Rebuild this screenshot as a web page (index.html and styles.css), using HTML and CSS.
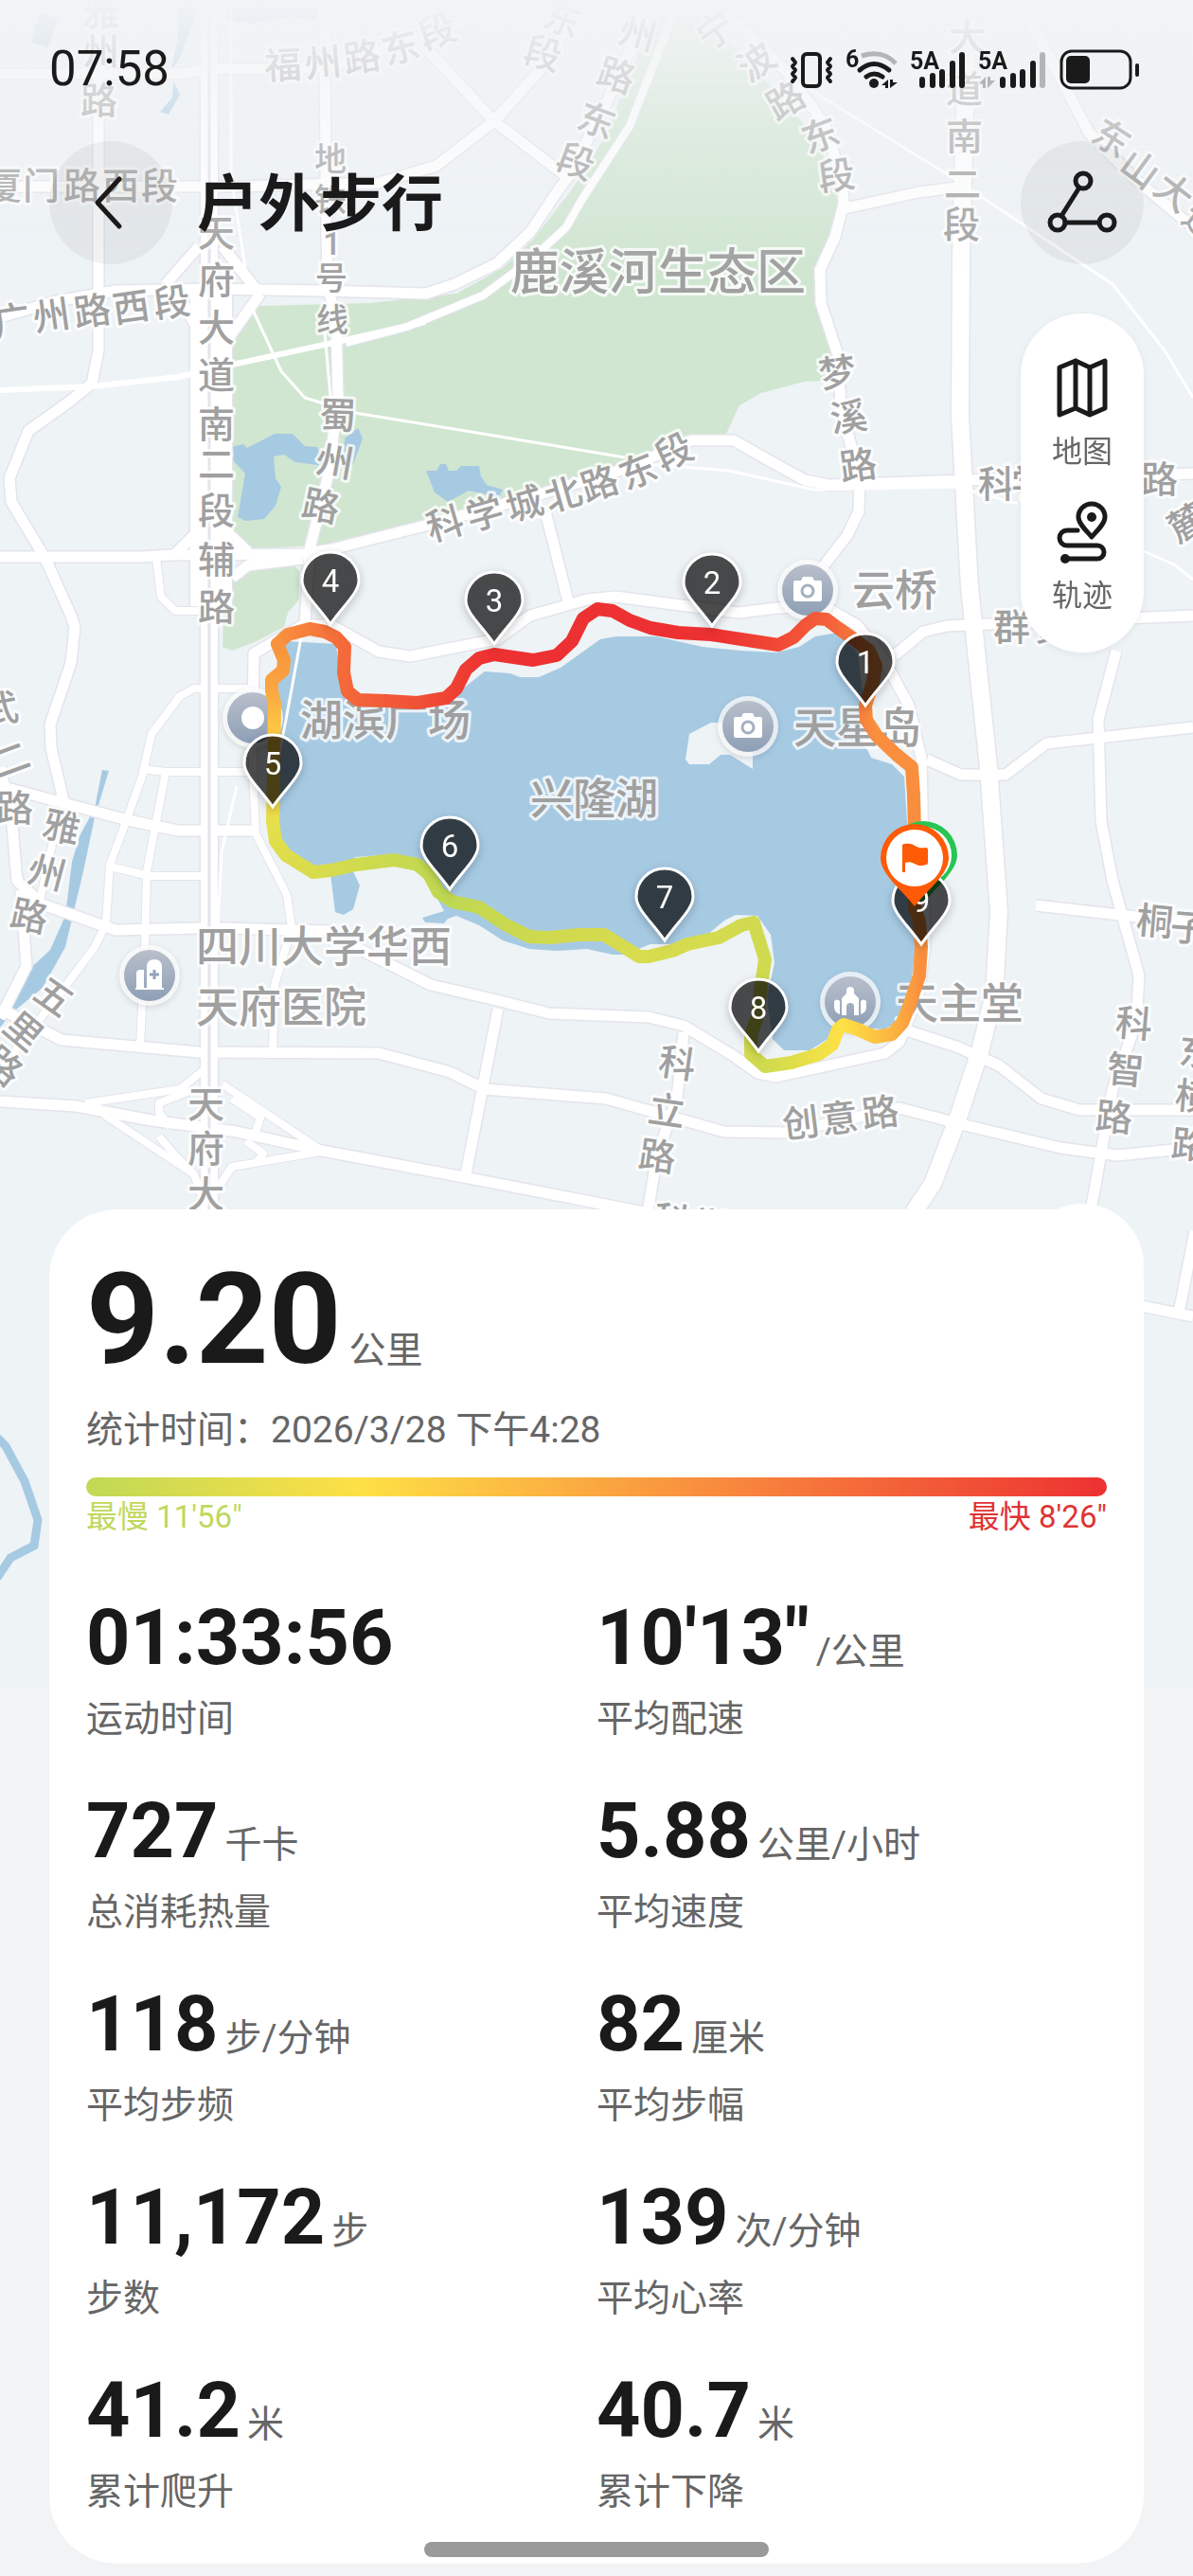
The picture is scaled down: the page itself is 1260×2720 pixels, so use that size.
FILE: index.html
```html
<!DOCTYPE html>
<html lang="zh-CN">
<head>
    <meta charset="UTF-8">
    <meta name="viewport" content="width=device-width, initial-scale=1.0">
    <title>户外步行</title>
    <link rel="stylesheet" href="styles.css">
</head>
<body>
<div class="screen">

    <!-- Map with the walked track -->
    <svg class="map" viewBox="0 0 1260 1782" role="img" aria-label="运动轨迹地图">
        <defs>
            <linearGradient id="fade" x1="0" y1="0" x2="0" y2="1">
                <stop offset="0" stop-color="#f1f3f5"/>
                <stop offset=".2" stop-color="#f1f3f5" stop-opacity=".8"/>
                <stop offset=".5" stop-color="#f1f3f5" stop-opacity=".42"/>
                <stop offset="1" stop-color="#f1f3f5" stop-opacity="0"/>
            </linearGradient>
            <linearGradient id="poi-fill" x1="0" y1="0" x2="0" y2="1">
                <stop offset="0" stop-color="#b9bfcb"/>
                <stop offset="1" stop-color="#8e9fb6"/>
            </linearGradient>
            <linearGradient id="pace-north" gradientUnits="userSpaceOnUse" x1="364" y1="0" x2="925" y2="0">
                <stop offset="0" stop-color="#f4683a"/>
                <stop offset=".14" stop-color="#f15036"/>
                <stop offset=".27" stop-color="#ed3132"/>
                <stop offset=".7" stop-color="#ed3132"/>
                <stop offset=".85" stop-color="#f25137"/>
                <stop offset=".92" stop-color="#f5643a"/>
                <stop offset="1" stop-color="#f98f3e"/>
            </linearGradient>
            <linearGradient id="pace-corner" gradientUnits="userSpaceOnUse" x1="364" y1="0" x2="293" y2="0">
                <stop offset="0" stop-color="#f4683a"/>
                <stop offset="1" stop-color="#f8923d"/>
            </linearGradient>
            <linearGradient id="pace-west" gradientUnits="userSpaceOnUse" x1="0" y1="680" x2="0" y2="921">
                <stop offset="0" stop-color="#f8923d"/>
                <stop offset=".2" stop-color="#faa640"/>
                <stop offset=".35" stop-color="#fdc443"/>
                <stop offset=".6" stop-color="#fdd545"/>
                <stop offset=".78" stop-color="#e6df4b"/>
                <stop offset="1" stop-color="#d9dc4c"/>
            </linearGradient>
            <linearGradient id="pace-south" gradientUnits="userSpaceOnUse" x1="331" y1="0" x2="808" y2="0">
                <stop offset="0" stop-color="#d9dc4c"/>
                <stop offset=".3" stop-color="#bfd852"/>
                <stop offset=".5" stop-color="#cfd94e"/>
                <stop offset=".73" stop-color="#d8dc4e"/>
                <stop offset="1" stop-color="#d0da4f"/>
            </linearGradient>
            <linearGradient id="pace-finish" gradientUnits="userSpaceOnUse" x1="808" y1="0" x2="973" y2="0">
                <stop offset="0" stop-color="#cfda4e"/>
                <stop offset=".35" stop-color="#f0e148"/>
                <stop offset=".5" stop-color="#fee045"/>
                <stop offset=".8" stop-color="#fdb641"/>
                <stop offset="1" stop-color="#f98f3e"/>
            </linearGradient>

            <g id="roads-wide">
                <path d="M221 0V1277"/>
                <path d="M210 300V640M236 310V640M210 330L221 370M236 330L222 370"/>
                <path d="M1022 0L1015 270 1014 440 1024 620 1044 810 1055 963 1050 1050 1035 1110 1012 1180 985 1250 965 1280"/>
            </g>
            <g id="roads-main">
                <path d="M104 0V370L97 405 72 425 30 455 10 505 12 530 48 590 75 650 79 662 75 700 53 765 54 790 67 845"/>
                <path d="M0 78H190L230 72 286 73 350 70 506 17"/>
                <path d="M0 197H245L400 193 461 175 522 128 571 73 604 20M449 50L522 128 600 188"/>
                <path d="M343 13L344 183 346 300 355 340 357 420 347 500 327 580 322 660"/>
                <path d="M0 335L60 318 122 307 220 305 340 307 450 310 480 300 525 278 560 245 590 200 600 187 640 110 680 20"/>
                <path d="M0 588H150L180 586 320 585 350 580 449 555 560 525 660 495 730 465H775L810 485 850 507 875 512 1020 507 1260 500"/>
                <path d="M185 585L210 560M238 560L262 583M245 610L262 597 320 590M275 310L225 380M175 300L210 260M270 305L235 260M185 305L210 350"/>
                <path d="M775 20L830 75 870 130 890 190 891 215 882 250 866 285 867 320 885 375 888 430 908 505 907 540 895 565 868 600M892 220L970 203 1010 198"/>
                <path d="M1085 15L1150 140 1200 190 1260 240"/>
                <path d="M267 760L268 690 320 660 350 660 400 688 433 693 525 675 560 650 620 633 650 630 780 647 820 642 870 640 905 660 930 690 960 745 973 800 977 1000 970 1050 950 1100 935 1112 820 1137 800 1133 775 1115 722 1083 685 1074 580 1070 520 1055 455 1040 385 1005 345 983 240 980 210 980 122 982 45 955 18 930 12 860 0 810"/>
                <path d="M576 540L600 635M945 692L975 667 1000 661 1260 650M979 802L1015 818H1062L1105 785 1260 768"/>
                <path d="M1179 687L1160 760 1163 867 1175 930 1203 1030 1200 1080 1175 1150 1150 1290M1094 956L1200 968 1260 975"/>
                <path d="M948 1085L1010 1105 1055 1125 1100 1160 1140 1172H1260"/>
                <path d="M0 1065L65 1098 210 1111 400 1112 475 1132 512 1150 640 1160 765 1195 830 1196 950 1170 1015 1187 1120 1212 1180 1220 1260 1212"/>
                <path d="M0 1163L80 1168 160 1183 250 1195 340 1215 490 1243 640 1272 700 1284M1200 1378L1260 1390M1262 1300L1245 1386"/>
                <path d="M526 1065L492 1240M722 1090L715 1160 694 1220 684 1280M620 1268L670 1280"/>
                <path d="M0 830L30 838 135 866 188 877H267M0 1075L28 1020 22 940"/>
            </g>
            <g id="roads-small">
                <path d="M165 590L170 630 185 645H210"/>
                <path d="M265 727H205L190 735 160 775 150 820 131 873 116 913 112 975 100 1000 70 1040 0 1130"/>
                <path d="M150 812L175 815H267M175 815L155 920 153 1000 148 1105M116 915L158 925H212"/>
                <path d="M267 765V815L270 880 303 945 308 980 290 1040 288 1110M60 870L40 960"/>
                <path d="M365 362L430 345 510 312 560 275 598 240 615 210 665 133 710 17"/>
                <path d="M90 1165L190 1150 215 1130M235 1145L340 1215M110 1177L205 1240 218 1277M345 1215L245 1232 225 1262"/>
                <path d="M200 1152L168 1165V1175L180 1190M168 1200L185 1220 205 1240M245 1160L275 1180 270 1195M260 1205L278 1218 270 1228"/>
            </g>
            <g id="pin">
                <path d="M0 0C-13 -19 -30 -33 -30 -46A30 30 0 0 1 30 -46C30 -33 13 -19 0 0Z"/>
            </g>
            <g id="camera">
                <circle r="32" class="poi-ring"/>
                <circle r="27" fill="url(#poi-fill)"/>
                <path fill="#fff" d="M-13 -10H-7L-5 -14H5L7 -10H13Q15 -10 15 -8V10Q15 12 13 12H-13Q-15 12 -15 10V-8Q-15 -10 -13 -10Z"/>
                <circle r="6" cy="1" fill="none" stroke="#a4afc0" stroke-width="3"/>
            </g>
        </defs>

        <rect width="1260" height="1782" fill="#eef3f6"/>

        <g fill="#d0e6d1">
            <path d="M640 143L604 200 563 253 531 283 482 310 392 320 273 323 241 360 235 473V557L261 580 347 575 449 553 644 505 730 462 767 458 781 428 804 415 849 403 869 402 881 370 865 320V283L881 247 887 213 865 150 816 93 775 50 740 15H690Z"/>
            <path d="M237 623L261 597 306 592 316 603V633L304 647 300 662 269 678 245 687 235 683Z"/>
        </g>
        <g fill="#a7cae3">
            <path d="M245 472L257 469 261 473 290 458H309L322 471 335 472 343 492 312 488 300 480 289 482 291 505 297 514 291 534 279 548 259 550 251 546 259 500 246 486Z"/>
            <path d="M378 452L383 463 373 490 362 495 364 463Z"/>
            <path d="M450 497H461L465 490H471L474 497H482L487 492H506L508 503 514 512 531 517 527 525 495 518 473 530 459 520Z"/>
            <path d="M108 813L115 814 100 863 88 920 69 1000 45 1043 12 1070 0 1085V1067L24 1030 53 1003 69 967 76 910 84 883 100 853Z"/>
            <path d="M41 13L61 20 51 50 33 45ZM188 7H208L202 27 192 57 180 77 188 40ZM183 85L190 100 178 121 169 118 182 103ZM241 7H335V22L310 17 265 25 241 21Z"/>
            <path d="M302 677L355 680 360 723 371 745 480 735 494 723 512 709 539 711 549 715H569L592 705 620 685 634 675 651 672H693L742 683 783 687 820 689 844 683 861 672 885 668 906 690 912 740 908 775 920 800 942 807 955 820 960 900 967 1000 961 1047 947 1080 934 1087 906 1085 885 1090 865 1103 855 1109H828L816 1097 810 1053 818 1017 814 987 800 967 777 966 765 972 747 987 708 997H687L659 1008 647 1008 620 1002 588 1004 559 1002 531 993 506 977 482 967 473 970 469 975 449 974 446 969 469 962 461 947 445 923 404 903 375 905 373 920 380 935 373 960 363 966 354 963 349 923 331 917 310 907 296 888 290 867V740Z"/>
        </g>
        <path d="M728 775L751 763H795V812L771 797H761L749 807H728L724 802Z" fill="#eef3f6"/>
        <path class="stream" d="M-3 1518L6 1527 26 1564 40 1605 36 1632 11 1645 -3 1666"/>

        <g class="roads">
            <use href="#roads-small" stroke="#e4e4ec" stroke-width="10"/>
            <use href="#roads-main" stroke="#e4e4ec" stroke-width="14"/>
            <use href="#roads-wide" stroke="#e4e4ec" stroke-width="21"/>
            <use href="#roads-small" stroke="#fff" stroke-width="8"/>
            <use href="#roads-main" stroke="#fff" stroke-width="11"/>
            <use href="#roads-wide" stroke="#fff" stroke-width="18"/>
            <path stroke="#e4e4ec" stroke-width="3" d="M221 0V1277"/>
            <path stroke="#fff" stroke-width="6" d="M0 412L98 408 188 398 245 385 347 363 449 340"/>
            <path stroke="#fff" stroke-width="3" d="M266 325L297 392 322 420 375 436 540 463 660 483M342 340L350 430M680 490L770 497 860 517 1010 514 1075 532M840 85L1010 190 1175 300 1230 370 1260 420M1208 582L1240 596 1260 612M318 673L302 760 290 820M250 830L234 900 230 980M244 0V185M244 185L260 290"/>
        </g>

        <g class="road-names">
            <text x="87 87 85" y="27 68 120">雅州路</text>
            <text x="280 323 365 408 448" y="84 82 77 69 53" rotate="-3 -5 -8 -15 -20">福州路东段</text>
            <text x="571 551" y="27 65" rotate="20 15">东段</text>
            <text x="651 628 607 585" y="44 87 134 177" rotate="15 18 20 20">州路东段</text>
            <text x="748 791 820 853 866" y="55 88 128 163 202" rotate="-35 -35 -30 -20 -8">宁波路东段</text>
            <text x="1002 999 999 997 996" y="53 108 158 208 251">大道南二段</text>
            <text x="1150 1180 1216 1246" y="147 178 202 233" rotate="33 36 38 38">东山大道</text>
            <text x="-16 24 67 108 149" y="210">厦门路西段</text>
            <text x="-5 37 80 121 164" y="355 350 345 341 336" rotate="-8">广州路西段</text>
            <text x="209" y="260">天</text>
            <text x="209" y="310">府</text>
            <text x="209" y="360">大</text>
            <text x="209" y="410">道</text>
            <text x="209" y="462">南</text>
            <text x="209" y="504">二</text>
            <text x="209" y="553">段</text>
            <text x="209" y="605">辅</text>
            <text x="209" y="655">路</text>
            <text x="337 332 317" y="452 498 544" rotate="2 10 12">蜀州路</text>
            <text x="455 497 539 580 619 661 700" y="572 561 551 541 530 518 498" rotate="-16 -16 -16 -16 -18 -22 -25">科学城北路东段</text>
            <text x="867 879 889" y="410 457 508" rotate="-8">梦溪路</text>
            <text x="1033 1068 1119 1162 1205" y="525 524 522 521 520">科学城北路</text>
            <text x="1244" y="574" rotate="-30">麓</text>
            <text x="1049 1092" y="676">群贤</text>
            <text x="-17 -2 -4" y="766 822 867" rotate="-10 -20 0">武二路</text>
            <text x="43 27 9" y="883 930 977" rotate="12 15 12">雅州路</text>
            <text x="33 1 -21" y="1053 1087 1124" rotate="35 40 40">五里路</text>
            <text x="198 198 198" y="1180 1227 1275">天府大</text>
            <text x="694 683 673" y="1134 1184 1232" rotate="8">科立路</text>
            <text x="828 869 912" y="1202 1197 1191" rotate="-7">创意路</text>
            <text x="1177 1168 1156" y="1093 1142 1192" rotate="5">科智路</text>
            <text x="1199 1235" y="985 992" rotate="5">桐子</text>
            <text x="1244 1240 1236" y="1123 1170 1221" rotate="5">东横路</text>
            <text x="688 729" y="1300 1306" rotate="8">科学</text>
            <g class="metro">
                <text x="332" y="180">地</text>
                <text x="332" y="223">铁</text>
                <text x="341" y="269">1</text>
                <text x="333" y="306">号</text>
                <text x="334" y="350">线</text>
            </g>
        </g>

        <g class="place-names">
            <text class="park" x="539" y="306">鹿溪河生态区</text>
            <text x="900" y="640">云桥</text>
            <text x="838" y="785">天星岛</text>
            <text x="317" y="777">湖滨广场</text>
            <text x="560" y="860">兴隆湖</text>
            <text x="207" y="1016">四川大学华西</text>
            <text x="207" y="1080">天府医院</text>
            <text x="946" y="1076">天主堂</text>
        </g>

        <g class="poi">
            <use href="#camera" x="853" y="623"/>
            <use href="#camera" x="790" y="767"/>
            <g transform="translate(267 758)">
                <circle r="32" class="poi-ring"/>
                <circle r="27" fill="url(#poi-fill)"/>
                <circle r="12" fill="#fff"/>
            </g>
            <g transform="translate(158 1030)">
                <circle r="32" class="poi-ring"/>
                <circle r="27" fill="url(#poi-fill)"/>
                <path fill="#fff" d="M-14 13V-2Q-14 -6 -10 -6H-6V13H-3V-9Q-3 -17 5 -17T13 -9V13H15V15H-15V13Z"/>
                <path stroke="#93a3b6" stroke-width="3" d="M5 -6V4M0 -1H10"/>
            </g>
            <g transform="translate(898 1058)">
                <circle r="32" class="poi-ring"/>
                <circle r="27" fill="url(#poi-fill)"/>
                <path fill="#fff" d="M-17 -1Q-14 -4 -11 -1V13Q-17 11 -17 5ZM17 -1Q14 -4 11 -1V13Q17 11 17 5ZM-9 14V-4L-4 -9V-12Q-4 -16 0 -16T4 -12V-9L9 -4V14H4V5Q4 1 0 1T-4 5V14Z"/>
            </g>
        </g>

        <rect width="1260" height="290" fill="url(#fade)"/>

        <g class="track">
            <path stroke="url(#pace-north)" d="M966 960L966 880 965 840 963 810 947 797 926 777 915 760 914 745 922 720 925 703 918 687 902 675 885 663 873 654 861 653 851 660 838 673 822 681 796 677 751 670 716 668 687 663 665 655 647 645 631 643 616 653 604 677 588 692 563 697 522 691 506 695 492 707 482 727 471 737 441 742 408 740 378 739 367 730 363 710"/>
            <path stroke="url(#pace-corner)" d="M363 710L364 683 355 673 343 667 327 664 304 670 293 680"/>
            <path stroke="url(#pace-west)" d="M293 680L300 697 299 708 287 718V730L290 743 289 820 288 867 291 888 302 903 331 921"/>
            <path stroke="url(#pace-south)" d="M331 921L349 919 376 913 416 908 441 913 453 923 463 942 478 952 506 958 535 977 559 989 580 990 612 987H638L659 1000 675 1010H685L710 1004 726 997 759 990 783 977 796 974 800 987 808 1013 804 1040 800 1073 793 1093V1113L808 1126"/>
            <path stroke="url(#pace-finish)" d="M808 1126L836 1122 865 1113 879 1103 885 1087 891 1082 906 1087 924 1095 942 1092 953 1080 961 1060 971 1030 973 1000 971 973 966 958"/>
        </g>

        <!-- start, kilometre and finish pins -->
        <g transform="translate(975 954)">
            <path fill="#27c552" d="M0 0C-14 -18 -36 -34 -36 -51A36 36 0 0 1 36 -51C36 -34 14 -18 0 0Z"/>
            <circle cy="-51" r="30" fill="#fff"/>
        </g>
        <g class="pins">
            <use href="#pin" x="914" y="745"/>
            <use href="#pin" x="752" y="661"/>
            <use href="#pin" x="522" y="680"/>
            <use href="#pin" x="349" y="659"/>
            <use href="#pin" x="288" y="852"/>
            <use href="#pin" x="475" y="939"/>
            <use href="#pin" x="702" y="993"/>
            <use href="#pin" x="801" y="1110"/>
            <use href="#pin" x="973" y="997"/>
        </g>
        <g class="pin-numbers">
            <text x="914" y="711">1</text>
            <text x="752" y="627">2</text>
            <text x="522" y="646">3</text>
            <text x="349" y="625">4</text>
            <text x="288" y="818">5</text>
            <text x="475" y="905">6</text>
            <text x="702" y="959">7</text>
            <text x="801" y="1076">8</text>
            <text x="973" y="963">9</text>
        </g>
        <g transform="translate(966 957)">
            <path fill="#ff5a05" d="M0 0C-14 -18 -36 -34 -36 -51A36 36 0 0 1 36 -51C36 -34 14 -18 0 0Z"/>
            <circle cy="-51" r="30" fill="#fff"/>
            <path fill="#ff5a05" d="M-13 -64Q-13 -66 -11 -66C-5 -67 -2 -66 2 -63C6 -61 9 -62 12 -62Q14 -62 14 -60V-46Q14 -44 12 -44C7 -42 3 -43 0 -45C-4 -47 -7 -47 -10 -46V-36H-13Z"/>
        </g>
    </svg>

    <div class="status-bar">
        <time class="clock">07:58</time>
        <div class="status-icons">
            <svg width="46" height="44" viewBox="0 0 46 44" aria-label="振动">
                <g fill="none" stroke="#1a1a1a" stroke-width="4" stroke-linejoin="round" stroke-linecap="round">
                    <rect x="14" y="6" width="18" height="34" rx="4"/>
                    <path d="M3 11L6 15 3 19 6 23 3 27 6 31 3 35M43 11L40 15 43 19 40 23 43 27 40 31 43 35"/>
                </g>
            </svg>
            <svg width="54" height="44" viewBox="0 0 54 44" aria-label="WLAN">
                <text x="-1" y="20">6</text>
                <g fill="none" stroke="#1a1a1a" stroke-width="5">
                    <path stroke="#b3b4b6" d="M16 8Q38 1 52 16"/>
                    <path stroke-linecap="round" d="M14 23Q29 10 45 23M21 30Q29 24 38 30"/>
                </g>
                <circle cx="29" cy="37" r="5" fill="#1a1a1a"/>
                <path fill="#1a1a1a" d="M37 39L44 33V42H41V39ZM46 33H49V36H54L46 42Z"/>
            </svg>
            <svg width="58" height="44" viewBox="0 0 58 44" aria-label="信号 1">
                <text x="-1" y="22">5A</text>
                <path stroke="#1a1a1a" stroke-width="6" stroke-linecap="round" d="M12 33V39M23 29V39M33 25V39M44 16V39M54 7V39"/>
            </svg>
            <svg width="71" height="44" viewBox="0 0 71 44" aria-label="信号 2">
                <text x="-1" y="22">5A</text>
                <path fill="#b3b4b6" d="M0 37L7 30V42H4V38ZM9 30H12V34H17L9 42Z"/>
                <path stroke="#1a1a1a" stroke-width="6" stroke-linecap="round" d="M25 33V39M36 29V39M46 25V39M57 16V39"/>
                <path stroke="#b3b4b6" stroke-width="6" stroke-linecap="round" d="M67 7V39"/>
            </svg>
            <svg width="85" height="44" viewBox="0 0 85 44" aria-label="电池">
                <rect x="2" y="3" width="73" height="39" rx="11" fill="none" stroke="#1a1a1a" stroke-width="3"/>
                <rect x="7" y="8" width="25" height="29" rx="5" fill="#1a1a1a"/>
                <rect x="80" y="16" width="4" height="14" rx="2" fill="#1a1a1a"/>
            </svg>
        </div>
    </div>

    <header class="title-bar">
        <button class="round-btn" type="button" aria-label="返回">
            <svg viewBox="0 0 130 130"><path d="M74 40L51 65L74 90"/></svg>
        </button>
        <h1>户外步行</h1>
        <button class="round-btn" type="button" aria-label="分享">
            <svg viewBox="0 0 130 130">
                <circle cx="66" cy="42" r="8"/>
                <circle cx="39" cy="86" r="8"/>
                <circle cx="91" cy="86" r="8"/>
                <path d="M62 49L43 79M47 86H83"/>
            </svg>
        </button>
    </header>

    <div class="map-tools">
        <button type="button">
            <svg viewBox="0 0 60 64"><path d="M6 11L23 4L38 11L54 4V54L38 61L23 54L6 61ZM23 4V54M38 11V61"/></svg>
            地图
        </button>
        <button type="button">
            <svg viewBox="0 0 60 64">
                <path d="M40 38C35 32 26 24 26 17A14 14 0 0 1 54 17C54 24 45 32 40 38Z"/>
                <circle class="dot" cx="40" cy="17" r="5"/>
                <path d="M25 31H14A8 8 0 0 0 14 47H46A7 7 0 0 1 46 61H13"/>
                <circle class="dot" cx="12" cy="61" r="5"/>
            </svg>
            轨迹
        </button>
    </div>

    <main class="panel">
        <button class="locate" type="button" aria-label="定位"></button>
        <section class="card">
            <p class="distance"><strong>9.20</strong><span>公里</span></p>
            <p class="date">统计时间：2026/3/28 下午4:28</p>
            <div class="pace-bar"></div>
            <div class="pace-range">
                <span class="slow">最慢 11'56"</span>
                <span class="fast">最快 8'26"</span>
            </div>

            <dl class="stats">
                <div class="stat">
                    <dd><strong>01:33:56</strong></dd>
                    <dt>运动时间</dt>
                </div>
                <div class="stat">
                    <dd><strong>10'13"</strong><span>/公里</span></dd>
                    <dt>平均配速</dt>
                </div>
                <div class="stat">
                    <dd><strong>727</strong><span>千卡</span></dd>
                    <dt>总消耗热量</dt>
                </div>
                <div class="stat">
                    <dd><strong>5.88</strong><span>公里/小时</span></dd>
                    <dt>平均速度</dt>
                </div>
                <div class="stat">
                    <dd><strong>118</strong><span>步/分钟</span></dd>
                    <dt>平均步频</dt>
                </div>
                <div class="stat">
                    <dd><strong>82</strong><span>厘米</span></dd>
                    <dt>平均步幅</dt>
                </div>
                <div class="stat">
                    <dd><strong>11,172</strong><span>步</span></dd>
                    <dt>步数</dt>
                </div>
                <div class="stat">
                    <dd><strong>139</strong><span>次/分钟</span></dd>
                    <dt>平均心率</dt>
                </div>
                <div class="stat">
                    <dd><strong>41.2</strong><span>米</span></dd>
                    <dt>累计爬升</dt>
                </div>
                <div class="stat">
                    <dd><strong>40.7</strong><span>米</span></dd>
                    <dt>累计下降</dt>
                </div>
            </dl>
        </section>
    </main>

    <div class="home-indicator"></div>
</div>
</body>
</html>
```
FILE: styles.css
```css
* {
    box-sizing: border-box;
}
body {
    margin: 0;
    background: #f1f3f5;
    color: #1a1a1a;
    font-family: Roboto, "Noto Sans CJK SC", sans-serif;
}
button {
    border: 0;
    padding: 0;
    background: none;
    font-family: inherit;
    color: inherit;
    cursor: pointer;
}
.screen {
    position: relative;
    overflow: hidden;
    display: flex;
    flex-direction: column;
    padding: 0 52px 12px;
}

/* map */
.map {
    position: absolute;
    top: 0;
    left: 0;
    width: 100%;
    height: auto;
}
.roads {
    fill: none;
    stroke-linejoin: round;
}
.stream {
    fill: none;
    stroke: #a7cae3;
    stroke-width: 9;
}
.road-names,
.place-names {
    fill: #a0a0a0;
    stroke: rgba(255, 255, 255, 0.8);
    stroke-width: 6;
    stroke-linejoin: round;
    paint-order: stroke;
    font-size: 39px;
    font-weight: 500;
}
.road-names .metro {
    font-size: 34px;
}
.place-names {
    font-size: 45px;
}
.place-names .park {
    font-size: 52px;
}
.poi-ring {
    fill: #fff;
    fill-opacity: 0.75;
}
.poi {
    filter: drop-shadow(0 2px 3px rgba(0, 0, 0, 0.15));
}
.track {
    fill: none;
    stroke-width: 14;
    stroke-linejoin: round;
    stroke-linecap: round;
}
.pins {
    fill: rgba(0, 0, 0, 0.65);
    stroke: #fff;
    stroke-width: 3;
    filter: drop-shadow(0 3px 4px rgba(0, 0, 0, 0.25));
}
.pin-numbers {
    fill: #fff;
    font-size: 33px;
    text-anchor: middle;
}

/* top bars */
.status-bar {
    position: relative;
    display: flex;
    align-items: center;
    justify-content: space-between;
    height: 149px;
    padding-bottom: 3px;
}
.clock {
    font-size: 51px;
    line-height: 60px;
}
.status-icons {
    display: flex;
    gap: 14px;
    padding-right: 4px;
}
.status-icons text {
    font-size: 25px;
    font-weight: 700;
    fill: #1a1a1a;
}
.title-bar {
    position: relative;
    display: flex;
    align-items: center;
    gap: 26px;
}
.title-bar h1 {
    flex: 1;
    margin: 0;
    padding-top: 4px;
    font-size: 65px;
    line-height: 80px;
    font-weight: 700;
}
.round-btn {
    width: 130px;
    height: 130px;
    border-radius: 50%;
    background: rgba(0, 0, 0, 0.05);
}
.round-btn svg,
.map-tools svg {
    display: block;
    fill: none;
    stroke: #1a1a1a;
    stroke-width: 5;
    stroke-linecap: round;
    stroke-linejoin: round;
    overflow: visible;
}
.map-tools {
    position: relative;
    align-self: flex-end;
    display: flex;
    flex-direction: column;
    align-items: center;
    gap: 32px;
    width: 130px;
    margin-top: 52px;
    padding: 46px 0 40px;
    border-radius: 65px;
    background: #fff;
    box-shadow: 0 2px 8px rgba(0, 0, 0, 0.06);
}
.map-tools button {
    display: flex;
    flex-direction: column;
    align-items: center;
    gap: 16px;
    font-size: 32px;
    line-height: 40px;
    color: #666;
}
.map-tools svg {
    width: 60px;
    height: 64px;
}
.map-tools .dot {
    fill: #1a1a1a;
    stroke: none;
}

/* data card */
.panel {
    position: relative;
    margin-top: 588px;
}
.locate {
    position: absolute;
    top: -6px;
    right: 0;
    width: 130px;
    height: 130px;
    border-radius: 50%;
    background: #fff;
}
.card {
    position: relative;
    padding: 49px 39px 50px;
    border-radius: 72px;
    background: #fff;
}
.card p,
.stats,
.stat dd {
    margin: 0;
}
.distance {
    display: flex;
    align-items: baseline;
    gap: 8px;
}
.distance strong {
    font-size: 134px;
    line-height: 136px;
}
.distance span,
.stat span,
.stat dt,
.date {
    font-size: 39px;
    line-height: 52px;
    color: #666;
}
.card .date {
    margin-top: 22px;
}
.pace-bar {
    height: 20px;
    margin-top: 24px;
    border-radius: 10px;
    background: linear-gradient(90deg, #c0d955, #fee045 27%, #f98f3e 60%, #ed3132);
}
.pace-range {
    display: flex;
    justify-content: space-between;
    font-size: 33px;
    line-height: 44px;
}
.slow {
    color: #c0d85c;
}
.fast {
    color: #e03333;
}
.stats {
    display: grid;
    grid-template-columns: 1fr 1fr;
    row-gap: 51px;
    padding-top: 64px;
}
.stat {
    display: flex;
    flex-direction: column;
    gap: 17px;
}
.stat dd {
    display: flex;
    align-items: baseline;
    gap: 7px;
}
.stat strong {
    font-size: 81px;
    line-height: 84px;
}
.home-indicator {
    position: absolute;
    bottom: 19px;
    left: 50%;
    width: 364px;
    height: 16px;
    margin-left: -182px;
    border-radius: 8px;
    background: #999;
}
```
